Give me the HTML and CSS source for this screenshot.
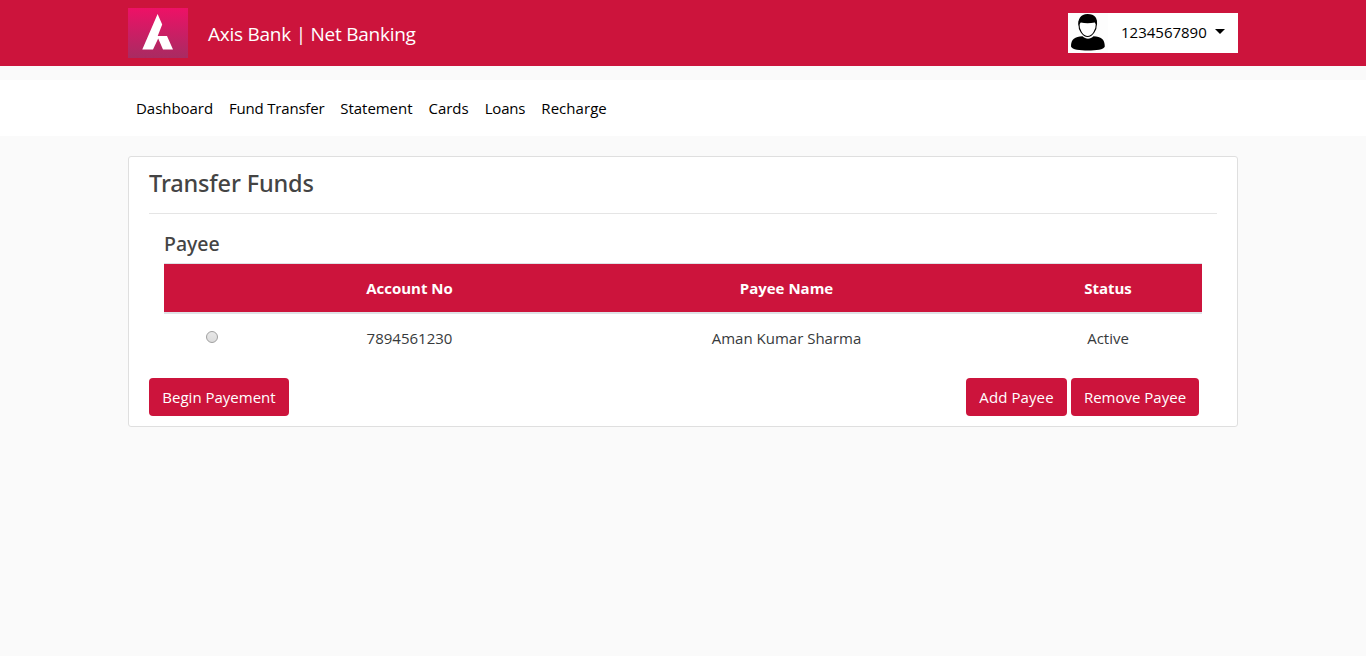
FILE: index.html
```html
<!DOCTYPE html>
<html lang="en">
<head>
<meta charset="utf-8">
<title>Axis Bank | Net Banking</title>
<link rel="stylesheet" href="styles.css">
</head>
<body>
<header class="topbar">
  <div class="container topbar-inner">
    <svg class="logo" viewBox="0 0 60 50" width="60" height="50">
      <defs><linearGradient id="g" x1="0" y1="0" x2="0" y2="1"><stop offset="0" stop-color="#ee1166"/><stop offset="1" stop-color="#a82b62"/></linearGradient></defs>
      <rect width="60" height="50" fill="url(#g)"/>
      <path d="M29.600 6L34.200 16.500L29.700 28H39L45 41.500H35L30.200 30.500L25 41.500H14.300Z" fill="#fff"/>
    </svg>
    <span class="brand">Axis Bank | Net Banking</span>
    <button class="account">
      <svg class="avatar" viewBox="0 0 40 40" width="40" height="40">
        <rect width="40" height="40" fill="#fdfdfd"/>
        <path d="M3 33.500C3 26 7 24 14.500 23.300C17.500 26.500 22.500 26.500 25.500 23.300C33 24 36.800 26 36.800 33.500C36 36.800 28 37.500 20 37.500S4 36.800 3 33.500Z" fill="#000"/>
        <path d="M11 11C10.500 17 15 23.500 19.600 23.500S28.700 17 28.300 11C28.500 6 26 4 19.800 4S11 6 11 11Z" fill="#fff" stroke="#000" stroke-width="1.100"/>
        <path d="M10.600 13C9.500 6 12.500 1 19.500 1C27 1 30 5 28.900 13C28 11 27.500 10.500 26.800 9.500C22 10.600 17 10.600 12.800 9.500C12 10.500 11.300 11 10.600 13Z" fill="#000"/>
      </svg>
      <span class="account-no">1234567890</span>
      <span class="caret"></span>
    </button>
  </div>
</header>
<nav class="nav">
  <div class="container nav-inner">
    <a class="nav-link dashboard">Dashboard</a>
    <a class="nav-link transfer">Fund Transfer</a>
    <a class="nav-link statement">Statement</a>
    <a class="nav-link cards">Cards</a>
    <a class="nav-link loans">Loans</a>
    <a class="nav-link recharge">Recharge</a>
  </div>
</nav>
<main class="container card">
  <h1 class="title">Transfer Funds</h1>
  <section class="payees">
    <h2 class="subtitle">Payee</h2>
    <table class="table">
      <colgroup><col class="col-select"><col class="col-account"><col class="col-name"><col class="col-status"></colgroup>
      <thead><tr><th></th><th>Account No</th><th>Payee Name</th><th>Status</th></tr></thead>
      <tbody><tr><td><input class="radio" type="radio" name="payee" aria-label="Select payee"></td><td>7894561230</td><td class="payee-name">Aman Kumar Sharma</td><td>Active</td></tr></tbody>
    </table>
  </section>
  <div class="actions">
    <button class="btn begin">Begin Payement</button>
    <button class="btn add">Add Payee</button>
    <button class="btn remove">Remove Payee</button>
  </div>
</main>
</body>
</html>
```
FILE: styles.css
```css
* { box-sizing: border-box; }
body {
  margin: 0;
  background: #fafafa;
  color: #373a3c;
  font: 15px/24px "Open Sans", "Noto Sans", sans-serif;
}
button { font: inherit; border: 0; white-space: nowrap; }
.container { width: 1110px; margin: 0 auto; }
.topbar { height: 66px; background: #cc143c; }
.topbar-inner { display: flex; align-items: center; height: 66px; }
.logo { display: block; }
.brand { margin-left: 20px; padding-top: 1px; color: #fff; font-size: 19px; letter-spacing: -0.25px; }
.account {
  display: flex;
  align-items: center;
  width: 170px;
  height: 40px;
  margin-left: auto;
  padding: 0;
  background: #fff;
  color: #000;
}
.account-no { margin: -2px 0 0 13px; }
.caret {
  margin: -3px 0 0 8px;
  border: 5px solid transparent;
  border-top-color: #000;
  border-bottom: 0;
}
.nav { height: 56px; margin-top: 14px; background: #fff; }
.nav-inner { display: flex; align-items: center; height: 56px; }
.nav-link { padding: 0 8px; color: #000; }
.dashboard { letter-spacing: -0.04px; }
.transfer { letter-spacing: -0.2px; }
.statement { letter-spacing: -0.05px; }
.loans { letter-spacing: -0.18px; }
.recharge { letter-spacing: 0.05px; }
.card {
  height: 271px;
  margin-top: 20px;
  padding: 10px 20px;
  background: #fff;
  border: 1px solid #dfdfdf;
  border-radius: 3px;
}
.title {
  height: 47px;
  margin: 0;
  border-bottom: 1px solid #e5e5e5;
  font-family: "Noto Sans", "Open Sans", sans-serif;
  font-size: 23.5px;
  line-height: 32px;
  font-weight: 500;
  letter-spacing: -0.15px;
  color: #444;
}
.payees { padding: 18px 15px 0; }
.subtitle {
  height: 31px;
  margin: 0;
  font-family: "Noto Sans", "Open Sans", sans-serif;
  font-size: 19.500px;
  line-height: 24px;
  font-weight: 500;
  color: #444;
}
.table { width: 1038px; border-collapse: separate; border-spacing: 0; table-layout: fixed; text-align: center; }
.col-select { width: 96px; }
.col-account { width: 299px; }
.col-name { width: 455px; }
.col-status { width: 188px; }
.table th {
  height: 51px;
  padding: 0;
  border-top: 1px solid #dee2e6;
  border-bottom: 2px solid #dee2e6;
  background: #cc143c;
  background-clip: padding-box;
  color: #fff;
  font-weight: 700;
}
.table td { height: 48px; padding: 0; }
.radio {
  appearance: none;
  display: block;
  width: 12px;
  height: 12px;
  margin: -3px auto 0;
  border: 1px solid #a0a0a0;
  border-radius: 50%;
  background: linear-gradient(#e8e8e8, #dcdcdc);
}
.actions { display: flex; gap: 4px; margin-top: 16px; padding-right: 18px; }
.btn { height: 38px; padding: 0; border-radius: 4px; background: #cc143c; color: #fff; }
.begin { width: 140px; margin-right: auto; }
.add { width: 101px; letter-spacing: 0.1px; }
.remove { width: 128px; }
```
